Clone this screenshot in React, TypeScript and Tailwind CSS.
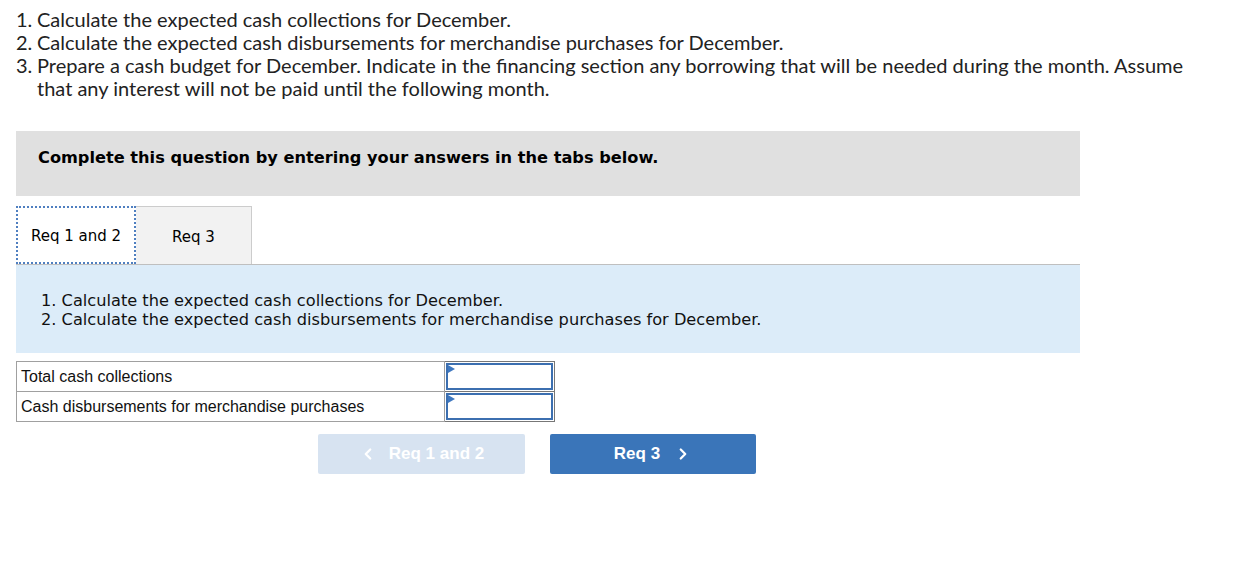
import { ChevronLeft, ChevronRight } from "lucide-react";

const rows = ["Total cash collections", "Cash disbursements for merchandise purchases"];

export default function App() {
  return (
    <div className="w-[1260px] h-[565px] bg-white text-[#1a1a1a] pl-4">
      {/* Instructions */}
      <ol className="pt-[8px] text-[20px] leading-[23px] text-[#222] font-['Lato',sans-serif] w-[1184px]">
        <li className="flex">
          <span className="w-[21px] shrink-0">1.</span>
          <span>Calculate the expected cash collections for December.</span>
        </li>
        <li className="flex">
          <span className="w-[21px] shrink-0">2.</span>
          <span>Calculate the expected cash disbursements for merchandise purchases for December.</span>
        </li>
        <li className="flex">
          <span className="w-[21px] shrink-0">3.</span>
          <span>
            Prepare a cash budget for December. Indicate in the financing section any borrowing that will be needed
            during the month. Assume that any interest will not be paid until the following month.
          </span>
        </li>
      </ol>

      <div className="w-[1064px] mt-[31px]">
        {/* Gray header */}
        <div className="h-[65px] bg-[#e0e0e0] pt-[17px] pl-[22px] font-['DejaVu_Sans',sans-serif] font-bold text-[16.2px] leading-[19px] text-black">
          Complete this question by entering your answers in the tabs below.
        </div>

        {/* Tabs */}
        <div className="mt-[10px] flex border-b border-[#bfbfbf] font-['DejaVu_Sans',sans-serif] text-[15px] text-black">
          <div className="w-[120px] h-[58px] -mb-px bg-white border-2 border-dotted border-[#4f7fc0] flex items-center justify-center pt-[3px]">
            Req 1 and 2
          </div>
          <div className="w-[116px] h-[58px] bg-[#f2f2f2] border border-l-0 border-b-0 border-[#cccccc] flex items-center justify-center pt-[3px]">
            Req 3
          </div>
        </div>

        {/* Blue panel */}
        <div className="h-[88px] bg-[#dcecf9] pt-[26px] pl-[25px] font-['DejaVu_Sans',sans-serif] text-[16.2px] leading-[19px] text-[#111]">
          <p>1. Calculate the expected cash collections for December.</p>
          <p>2. Calculate the expected cash disbursements for merchandise purchases for December.</p>
        </div>

        {/* Table */}
        <table className="mt-[8px] border-collapse font-['Liberation_Sans',sans-serif] text-[16px] leading-[18px] text-[#111]">
          <tbody>
            {rows.map((r) => (
              <tr key={r} className="h-[30px]">
                <td className="w-[428px] h-[30px] border border-[#a0a0a0] pl-[4px] py-0">{r}</td>
                <td className="w-[110px] h-[30px] border border-[#777] p-0">
                  <div className="relative h-[27px] m-px border-2 border-[#3c6fb0] bg-white">
                    <svg className="absolute left-0 top-0" width="8" height="10" viewBox="0 0 8 10">
                      <polygon points="0,0 7,4 0,8" fill="#3f78c0" />
                    </svg>
                  </div>
                </td>
              </tr>
            ))}
          </tbody>
        </table>

        {/* Nav buttons */}
        <div className="mt-[12px] flex gap-[25px] pl-[302px] font-['Liberation_Sans',sans-serif] font-bold text-[17px] text-white">
          <button className="w-[207px] h-[40px] rounded-[2px] bg-[#d7e3f1] flex items-center justify-center gap-[12px]">
            <ChevronLeft size={18} strokeWidth={3} />
            <span>Req 1 and 2</span>
          </button>
          <button className="w-[206px] h-[40px] rounded-[2px] bg-[#3a75b9] flex items-center justify-center gap-[14px]">
            <span>Req 3</span>
            <ChevronRight size={18} strokeWidth={3} />
          </button>
        </div>
      </div>
    </div>
  );
}
